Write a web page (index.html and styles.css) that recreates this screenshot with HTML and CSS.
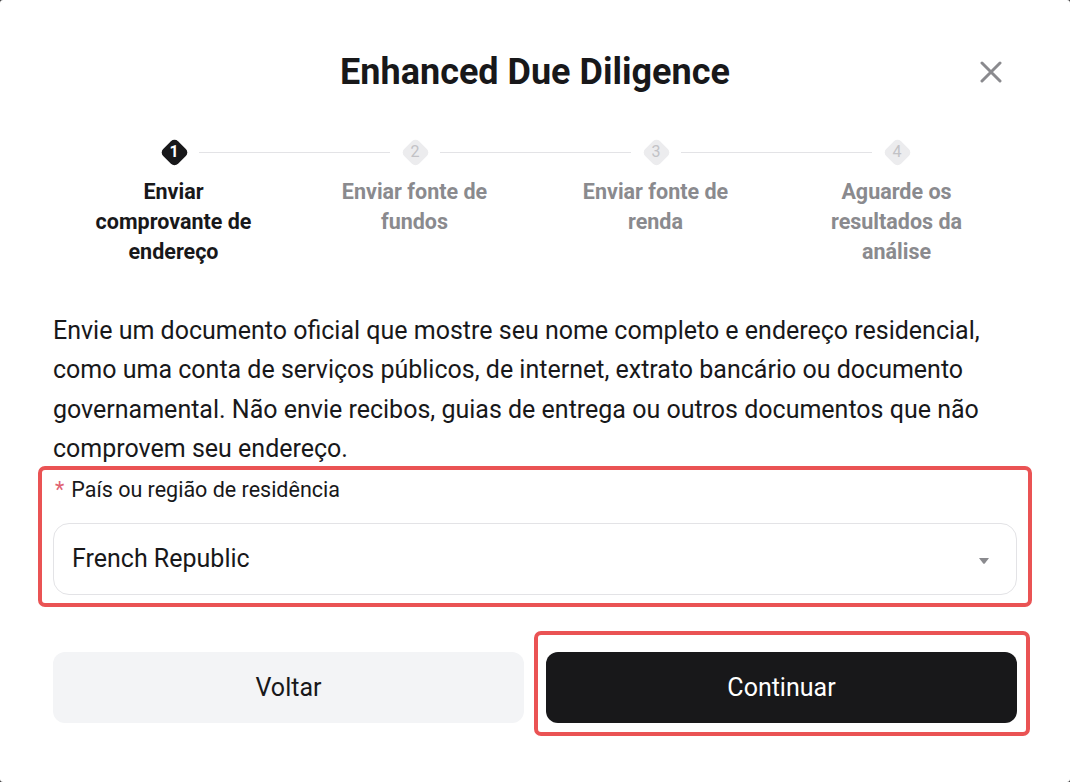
FILE: index.html
```html
<!DOCTYPE html>
<html lang="pt">
<head>
<meta charset="utf-8">
<title>Enhanced Due Diligence</title>
<link rel="stylesheet" href="styles.css">
</head>
<body>
<div class="modal">
  <header class="header">
    <span></span>
    <h1 class="title">Enhanced Due Diligence</h1>
    <button class="close" aria-label="Fechar">
      <svg width="22" height="22" viewBox="0 0 22 22"><path d="M2 2 L20 20 M20 2 L2 20" stroke="#8a8a8e" stroke-width="3" stroke-linecap="round" fill="none"/></svg>
    </button>
  </header>

  <div class="stepper">
    <div class="track">
      <div class="dot active"><span class="diamond"></span><span class="num">1</span></div>
      <div class="line"></div>
      <div class="dot"><span class="diamond"></span><span class="num">2</span></div>
      <div class="line"></div>
      <div class="dot"><span class="diamond"></span><span class="num">3</span></div>
      <div class="line"></div>
      <div class="dot"><span class="diamond"></span><span class="num">4</span></div>
    </div>
    <div class="labels">
      <div class="label active">Enviar comprovante de endereço</div>
      <div class="label">Enviar fonte de fundos</div>
      <div class="label">Enviar fonte de renda</div>
      <div class="label">Aguarde os resultados da análise</div>
    </div>
  </div>

  <p class="desc">Envie um documento oficial que mostre seu nome completo e endereço residencial, como uma conta de serviços públicos, de internet, extrato bancário ou documento governamental. Não envie recibos, guias de entrega ou outros documentos que não comprovem seu endereço.</p>

  <div class="field">
    <div class="field-label"><span class="req">*</span>País ou região de residência</div>
    <div class="select">
      <span class="value">French Republic</span>
      <svg class="caret" width="12" height="8" viewBox="0 0 12 8"><path d="M1 1 H11 L6.8 6.4 Q6 7.3 5.2 6.4 Z" fill="#8a8a8e"/></svg>
    </div>
  </div>

  <div class="actions">
    <button class="btn secondary">Voltar</button>
    <button class="btn primary">Continuar</button>
  </div>

  <div class="annot annot-field"></div>
  <div class="annot annot-btn"></div>
</div>
</body>
</html>
```

FILE: styles.css
```css
html { background: #3a3a3c; }
body {
  margin: 0;
  font-family: Roboto, "Noto Sans", Arial, sans-serif;
  color: #18181a;
}
.modal {
  position: relative;
  width: 1070px;
  height: 782px;
  box-sizing: border-box;
  background: #fff;
  border-radius: 3px;
  padding: 0 53px;
  overflow: hidden;
}
.header {
  display: grid;
  grid-template-columns: 1fr auto 1fr;
  align-items: center;
  padding-top: 48px;
  height: 48px;
}
.title {
  margin: 0;
  font-size: 36px;
  font-weight: 700;
  line-height: 48px;
}
.close {
  justify-self: end;
  margin-right: 15px;
  width: 22px;
  height: 22px;
  padding: 0;
  border: 0;
  background: none;
  display: flex;
}
.stepper {
  margin-top: 42px;
}
.track {
  display: flex;
  align-items: center;
  padding: 0 106px 0 107px;
  height: 28px;
}
.dot {
  position: relative;
  width: 28px;
  height: 28px;
  display: flex;
  align-items: center;
  justify-content: center;
  flex: none;
}
.diamond {
  position: absolute;
  left: 3.5px;
  top: 3.5px;
  width: 21px;
  height: 21px;
  border-radius: 5px;
  background: #ececee;
  transform: rotate(45deg);
}
.dot.active .diamond { background: #18181a; }
.num {
  position: relative;
  font-size: 16px;
  line-height: 1;
  color: #c2c2c6;
}
.dot.active .num { color: #fff; font-weight: 700; }
.line {
  flex: 1;
  height: 1px;
  background: #e3e3e6;
  margin: 0 11px;
}
.labels {
  display: grid;
  grid-template-columns: repeat(4, 1fr);
  margin-top: 11px;
}
.label {
  justify-self: center;
  max-width: 175px;
  text-align: center;
  font-size: 21.5px;
  font-weight: 700;
  line-height: 30px;
  color: #8a8a8e;
}
.label.active { color: #18181a; }
.desc {
  margin: 44px 0 0;
  font-size: 25px;
  line-height: 39.4px;
  color: #18181a;
}
.field {
  margin-top: 9px;
}
.field-label {
  font-size: 21.5px;
  line-height: 24px;
  padding-left: 2px;
}
.req {
  color: #e06272;
  margin-right: 7px;
}
.select {
  margin-top: 21px;
  height: 72px;
  box-sizing: border-box;
  border: 1px solid #e3e3e6;
  border-radius: 16px;
  display: flex;
  align-items: center;
  justify-content: space-between;
  padding: 0 26px 0 18px;
}
.value {
  font-size: 25px;
}
.caret { margin-top: 4px; }
.actions {
  margin-top: 57px;
  display: grid;
  grid-template-columns: 1fr 1fr;
  gap: 22px;
}
.btn {
  height: 71px;
  border: 0;
  border-radius: 12px;
  font-family: inherit;
  font-size: 25px;
}
.btn.secondary { background: #f3f4f6; color: #18181a; }
.btn.primary { background: #18181a; color: #fff; }
.annot {
  position: absolute;
  border: 4px solid #ea5354;
  border-radius: 7px;
  box-sizing: border-box;
  pointer-events: none;
}
.annot-field { left: 38px; top: 466px; width: 994px; height: 141px; }
.annot-btn { left: 534px; top: 631px; width: 496px; height: 105px; }
```
